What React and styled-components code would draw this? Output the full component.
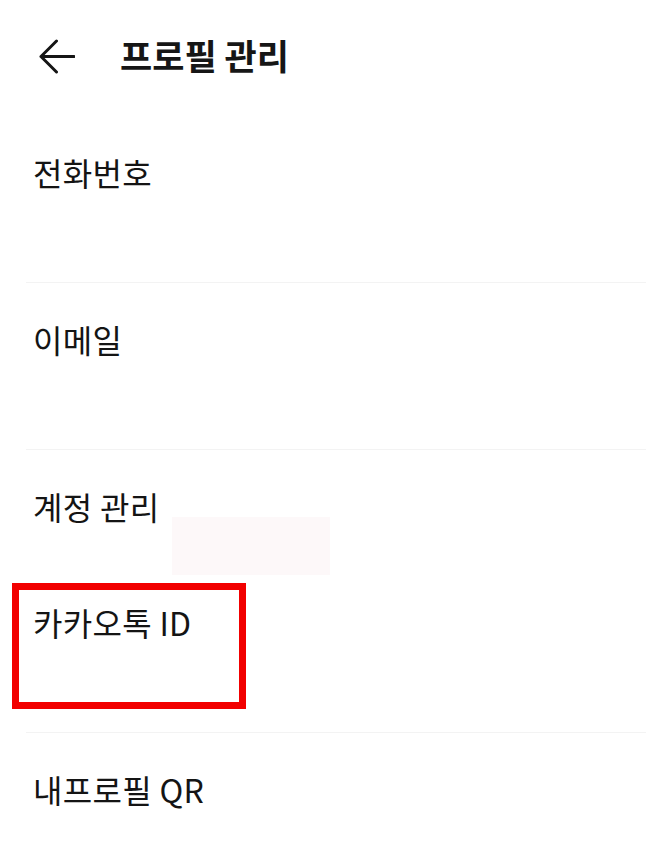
import React from "react";
import styled, { createGlobalStyle } from "styled-components";

const Global = createGlobalStyle`
  html, body { margin: 0; padding: 0; background: #ffffff; }
  body {
    font-family: "Noto Sans CJK KR", "Noto Sans", sans-serif;
    color: #121212;
  }
`;

const Page = styled.div`
  position: relative;
  width: 646px;
  min-height: 868px;
  background: #ffffff;
  overflow: hidden;
`;

const Header = styled.header`
  height: 110px;
  display: flex;
  align-items: center;
  padding-left: 38px;
  gap: 45px;
`;

const BackButton = styled.button`
  border: 0;
  background: none;
  padding: 0;
  width: 37px;
  height: 35px;
  display: flex;
  cursor: pointer;
  margin-top: 2px;
`;

const Title = styled.h1`
  margin: 0;
  font-size: 35px;
  line-height: 40px;
  font-weight: 700;
  color: #161616;
  letter-spacing: 0px;
`;

const List = styled.div`
  padding-left: 26px;
  margin-top: 6px;
`;

const Group = styled.section`
  display: flex;
  flex-direction: column;
  gap: 76px;
  padding: 36px 0 ${(p) => (p.$last ? "0" : "90px")} 7px;
  border-bottom: ${(p) => (p.$last ? "none" : "1.5px solid #f3f3f3")};
`;

const Item = styled.div`
  position: relative;
  font-size: 32px;
  line-height: 40px;
  font-weight: 400;
  color: #141414;
  letter-spacing: 0.3px;
`;

const Highlight = styled.div`
  position: absolute;
  left: -21px;
  top: -19px;
  width: 234px;
  height: 126px;
  box-sizing: border-box;
  border: 7px solid #f20000;
  pointer-events: none;
`;

const Smudge = styled.div`
  position: absolute;
  left: 172px;
  top: 517px;
  width: 158px;
  height: 58px;
  background: #fdf8f9;
  pointer-events: none;
`;

const BackIcon = () => (
  <svg width="37" height="35" viewBox="0 0 37 35" fill="none">
    <path
      d="M36 17.5H3M18.5 2L3 17.5L18.5 33"
      stroke="#151515"
      strokeWidth="3"
      strokeLinecap="round"
      strokeLinejoin="round"
    />
  </svg>
);

export default function App() {
  return (
    <Page>
      <Global />
      <Header>
        <BackButton aria-label="뒤로">
          <BackIcon />
        </BackButton>
        <Title>프로필 관리</Title>
      </Header>
      <Smudge />
      <List>
        <Group>
          <Item>전화번호</Item>
        </Group>
        <Group>
          <Item>이메일</Item>
        </Group>
        <Group>
          <Item>계정 관리</Item>
          <Item>
            카카오톡 ID
            <Highlight />
          </Item>
        </Group>
        <Group $last>
          <Item>내프로필 QR</Item>
        </Group>
      </List>
    </Page>
  );
}
